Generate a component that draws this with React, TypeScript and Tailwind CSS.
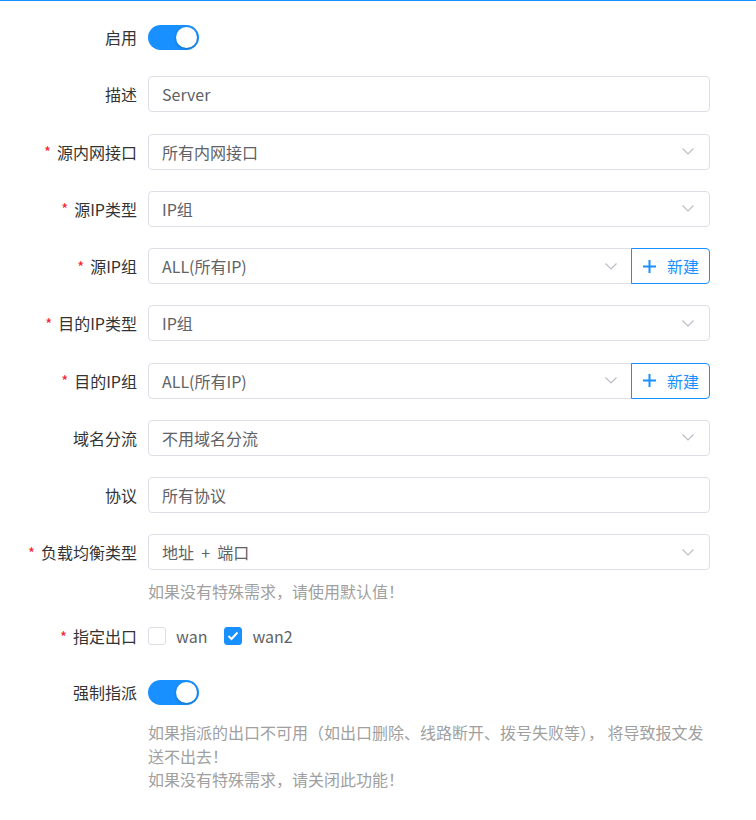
import { useState, type ReactNode } from "react";

function Chevron() {
  return (
    <svg width="12" height="7" viewBox="0 0 12 7" fill="none" className="shrink-0">
      <polyline points="0.5,0.5 6,6 11.5,0.5" stroke="#b8bcc4" strokeWidth="1.1" />
    </svg>
  );
}

function Switch({ on, onChange }: { on: boolean; onChange: (v: boolean) => void }) {
  return (
    <button
      type="button"
      onClick={() => onChange(!on)}
      className={`relative w-[51px] h-[25px] rounded-full transition-colors ${on ? "bg-[#1890ff]" : "bg-[#c0c4cc]"}`}
    >
      <span
        className={`absolute top-[2px] w-[21px] h-[21px] rounded-full bg-white shadow-[0_1px_3px_rgba(0,0,0,0.25)] transition-all ${on ? "left-[28px]" : "left-[2px]"}`}
      />
    </button>
  );
}

function Checkbox({ checked, label, onChange }: { checked: boolean; label: string; onChange: (v: boolean) => void }) {
  return (
    <label className="flex items-center gap-[10px] cursor-pointer" onClick={() => onChange(!checked)}>
      <span
        className={`w-[18px] h-[18px] rounded-[3px] border flex items-center justify-center ${checked ? "bg-[#1890ff] border-[#1890ff]" : "bg-white border-[#dcdfe6]"}`}
      >
        {checked && (
          <svg width="12" height="10" viewBox="0 0 12 10" fill="none">
            <polyline points="1.5,5 4.5,8 10.5,1.5" stroke="white" strokeWidth="2" />
          </svg>
        )}
      </span>
      <span className="text-[#606266] leading-[22px]">{label}</span>
    </label>
  );
}

function Select({ value, grouped }: { value: string; grouped?: boolean }) {
  return (
    <div
      className={`flex-1 h-[36px] flex items-center justify-between border border-[#dcdfe6] bg-white pl-[13px] ${grouped ? "rounded-l-[4px] pr-[14px]" : "rounded-[4px] pr-[15px]"}`}
    >
      <span className="text-[#606266] whitespace-pre">{value}</span>
      <Chevron />
    </div>
  );
}

function NewButton() {
  return (
    <button
      type="button"
      className="-ml-px h-[36px] w-[79px] flex items-center gap-[11px] pl-[11px] border border-[#1890ff] rounded-r-[4px] bg-white text-[#1890ff]"
    >
      <svg width="13" height="13" viewBox="0 0 13 13" fill="none">
        <path d="M6.5 0v13M0 6.5h13" stroke="#1890ff" strokeWidth="2" />
      </svg>
      <span>新建</span>
    </button>
  );
}

function Field({
  label,
  required,
  children,
  className = "mb-[21.25px]",
}: {
  label: string;
  required?: boolean;
  children: ReactNode;
  className?: string;
}) {
  return (
    <div className={`flex ${className}`}>
      <div className="w-[137px] h-[36px] flex items-center justify-end shrink-0 text-[#333333]">
        {required && <span className="text-[#f5222d] mr-[6px] text-[15px] leading-none">*</span>}
        {label}
      </div>
      <div className="ml-[11px] w-[562px]">{children}</div>
    </div>
  );
}

export default function App() {
  const [enabled, setEnabled] = useState(true);
  const [force, setForce] = useState(true);
  const [wan, setWan] = useState(false);
  const [wan2, setWan2] = useState(true);

  return (
    <div className="min-h-[820px] bg-white text-[16px] font-['Noto_Sans_CJK_SC','Noto_Sans',sans-serif]">
      <div className="h-px bg-[#1890ff]" />
      <form className="pt-[18px]" onSubmit={(e) => e.preventDefault()}>
        <Field label="启用">
          <div className="h-[36px] flex items-center">
            <Switch on={enabled} onChange={setEnabled} />
          </div>
        </Field>

        <Field label="描述">
          <input
            defaultValue="Server"
            className="w-full h-[36px] border border-[#dcdfe6] rounded-[4px] px-[13px] text-[#606266] outline-none focus:border-[#1890ff]"
          />
        </Field>

        <Field label="源内网接口" required>
          <Select value="所有内网接口" />
        </Field>

        <Field label="源IP类型" required>
          <Select value="IP组" />
        </Field>

        <Field label="源IP组" required>
          <div className="flex">
            <Select value="ALL(所有IP)" grouped />
            <NewButton />
          </div>
        </Field>

        <Field label="目的IP类型" required>
          <Select value="IP组" />
        </Field>

        <Field label="目的IP组" required>
          <div className="flex">
            <Select value="ALL(所有IP)" grouped />
            <NewButton />
          </div>
        </Field>

        <Field label="域名分流">
          <Select value="不用域名分流" />
        </Field>

        <Field label="协议">
          <input
            defaultValue="所有协议"
            className="w-full h-[36px] border border-[#dcdfe6] rounded-[4px] px-[13px] text-[#606266] outline-none focus:border-[#1890ff]"
          />
        </Field>

        <Field label="负载均衡类型" required className="mb-[16px]">
          <Select value="地址  +  端口" />
          <p className="mt-[10px] leading-[22px] text-[#a0a0a0]">如果没有特殊需求，请使用默认值！</p>
        </Field>

        <Field label="指定出口" required className="mb-[20px]">
          <div className="h-[36px] flex items-center gap-[17px]">
            <Checkbox checked={wan} label="wan" onChange={setWan} />
            <Checkbox checked={wan2} label="wan2" onChange={setWan2} />
          </div>
        </Field>

        <Field label="强制指派">
          <div className="h-[36px] flex items-center">
            <Switch on={force} onChange={setForce} />
          </div>
          <p className="mt-[10px] leading-[24px] text-[#a0a0a0]">
            如果指派的出口不可用（如出口删除、线路断开、拨号失败等）， 将导致报文发送不出去！
          </p>
          <p className="leading-[22px] text-[#a0a0a0]">如果没有特殊需求，请关闭此功能！</p>
        </Field>
      </form>
    </div>
  );
}
